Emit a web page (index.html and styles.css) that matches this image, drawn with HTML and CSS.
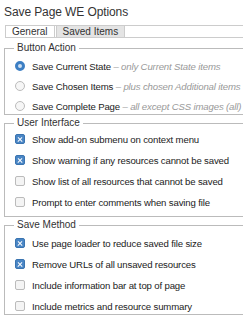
FILE: index.html
```html
<!DOCTYPE html>
<html lang="en">
<head>
<meta charset="UTF-8"/>
<title>Save Page WE Options</title>
<link rel="stylesheet" href="styles.css">
</head>
<body>

<h1>Save Page WE Options</h1>

<div class="tabs">
  <span class="tab active">General</span>
  <span class="tab">Saved Items</span>
</div>

<fieldset class="group g-action">
  <legend>Button Action</legend>
  <label class="row"><span class="radio on"></span><span>Save Current State <i>– only Current State items</i></span></label>
  <label class="row"><span class="radio"></span><span>Save Chosen Items <i>– plus chosen Additional items</i></span></label>
  <label class="row"><span class="radio"></span><span>Save Complete Page <i>– all except CSS images (all)</i></span></label>
</fieldset>

<fieldset class="group g-ui">
  <legend>User Interface</legend>
  <label class="row"><span class="check on"></span><span>Show add-on submenu on context menu</span></label>
  <label class="row"><span class="check on"></span><span>Show warning if any resources cannot be saved</span></label>
  <label class="row"><span class="check"></span><span>Show list of all resources that cannot be saved</span></label>
  <label class="row"><span class="check"></span><span>Prompt to enter comments when saving file</span></label>
</fieldset>

<fieldset class="group g-method">
  <legend>Save Method</legend>
  <label class="row"><span class="check on"></span><span>Use page loader to reduce saved file size</span></label>
  <label class="row"><span class="check on"></span><span>Remove URLs of all unsaved resources</span></label>
  <label class="row"><span class="check"></span><span>Include information bar at top of page</span></label>
  <label class="row"><span class="check"></span><span>Include metrics and resource summary</span></label>
</fieldset>

</body>
</html>
```

FILE: styles.css
```css
html { overflow: hidden; }
body {
  margin: 0; padding: 0;
  font-family: "Liberation Sans", Arial, sans-serif;
  font-size: 10px; color: #333;
  background: #fff;
}
h1 {
  margin: 0; padding: 4px 0 0 4px;
  font-size: 12px; line-height: 16px; font-weight: normal;
  letter-spacing: -0.1px; color: #333;
}
.tabs {
  display: flex; width: 300px;
  margin: 5px 0 0 5px;
  border-top: 1px solid #ccc; border-bottom: 1px solid #ccc;
}
.tab {
  padding: 0 6px; line-height: 11px; height: 11px;
  border-left: 1px solid #ccc; border-right: 1px solid #ccc;
  margin-right: 1px;
}
.tab.active { background: #fff; }
.tab:not(.active) { background: #e4e4e4; }

.group {
  width: 270px; box-sizing: border-box;
  margin: 0 0 0 4px; padding: 0 0 0 9px;
  border: 1px solid #bbb;
  display: flex; flex-direction: column;
}
.group legend {
  padding: 0 3px; line-height: 12px; font-size: 10px;
}
.g-action { margin-top: 4px; padding-top: 4px; gap: 4px; }
.g-ui { margin-top: 2px; padding-top: 2px; padding-bottom: 6px; gap: 5px; }
.g-method { margin-top: 2px; padding-top: 4px; gap: 5px; }

.row {
  display: flex; align-items: center; gap: 7px;
  height: 16px; padding-left: 1px;
  white-space: nowrap; color: #222;
  font-size: 9.6px; letter-spacing: -0.15px;
}
.row i { color: #999; }

.radio {
  width: 10px; height: 10px; flex: none;
  box-sizing: border-box; border-radius: 50%;
  border: 1px solid #bbb; background: #f6f6f6;
}
.radio.on {
  border: 3px solid #3d7fc4; background: #cfe0f2;
}
.check {
  width: 10px; height: 10px; flex: none;
  box-sizing: border-box; border-radius: 2px;
  border: 1px solid #bbb; background: #f4f4f4;
  position: relative;
}
.check.on { background: #4a86c5; border-color: #3a74b0; }
.check.on::before, .check.on::after {
  content: ""; position: absolute; left: 1px; top: 3.5px;
  width: 6px; height: 1.3px; background: #fff;
}
.check.on::before { transform: rotate(45deg); }
.check.on::after { transform: rotate(-45deg); }
```
